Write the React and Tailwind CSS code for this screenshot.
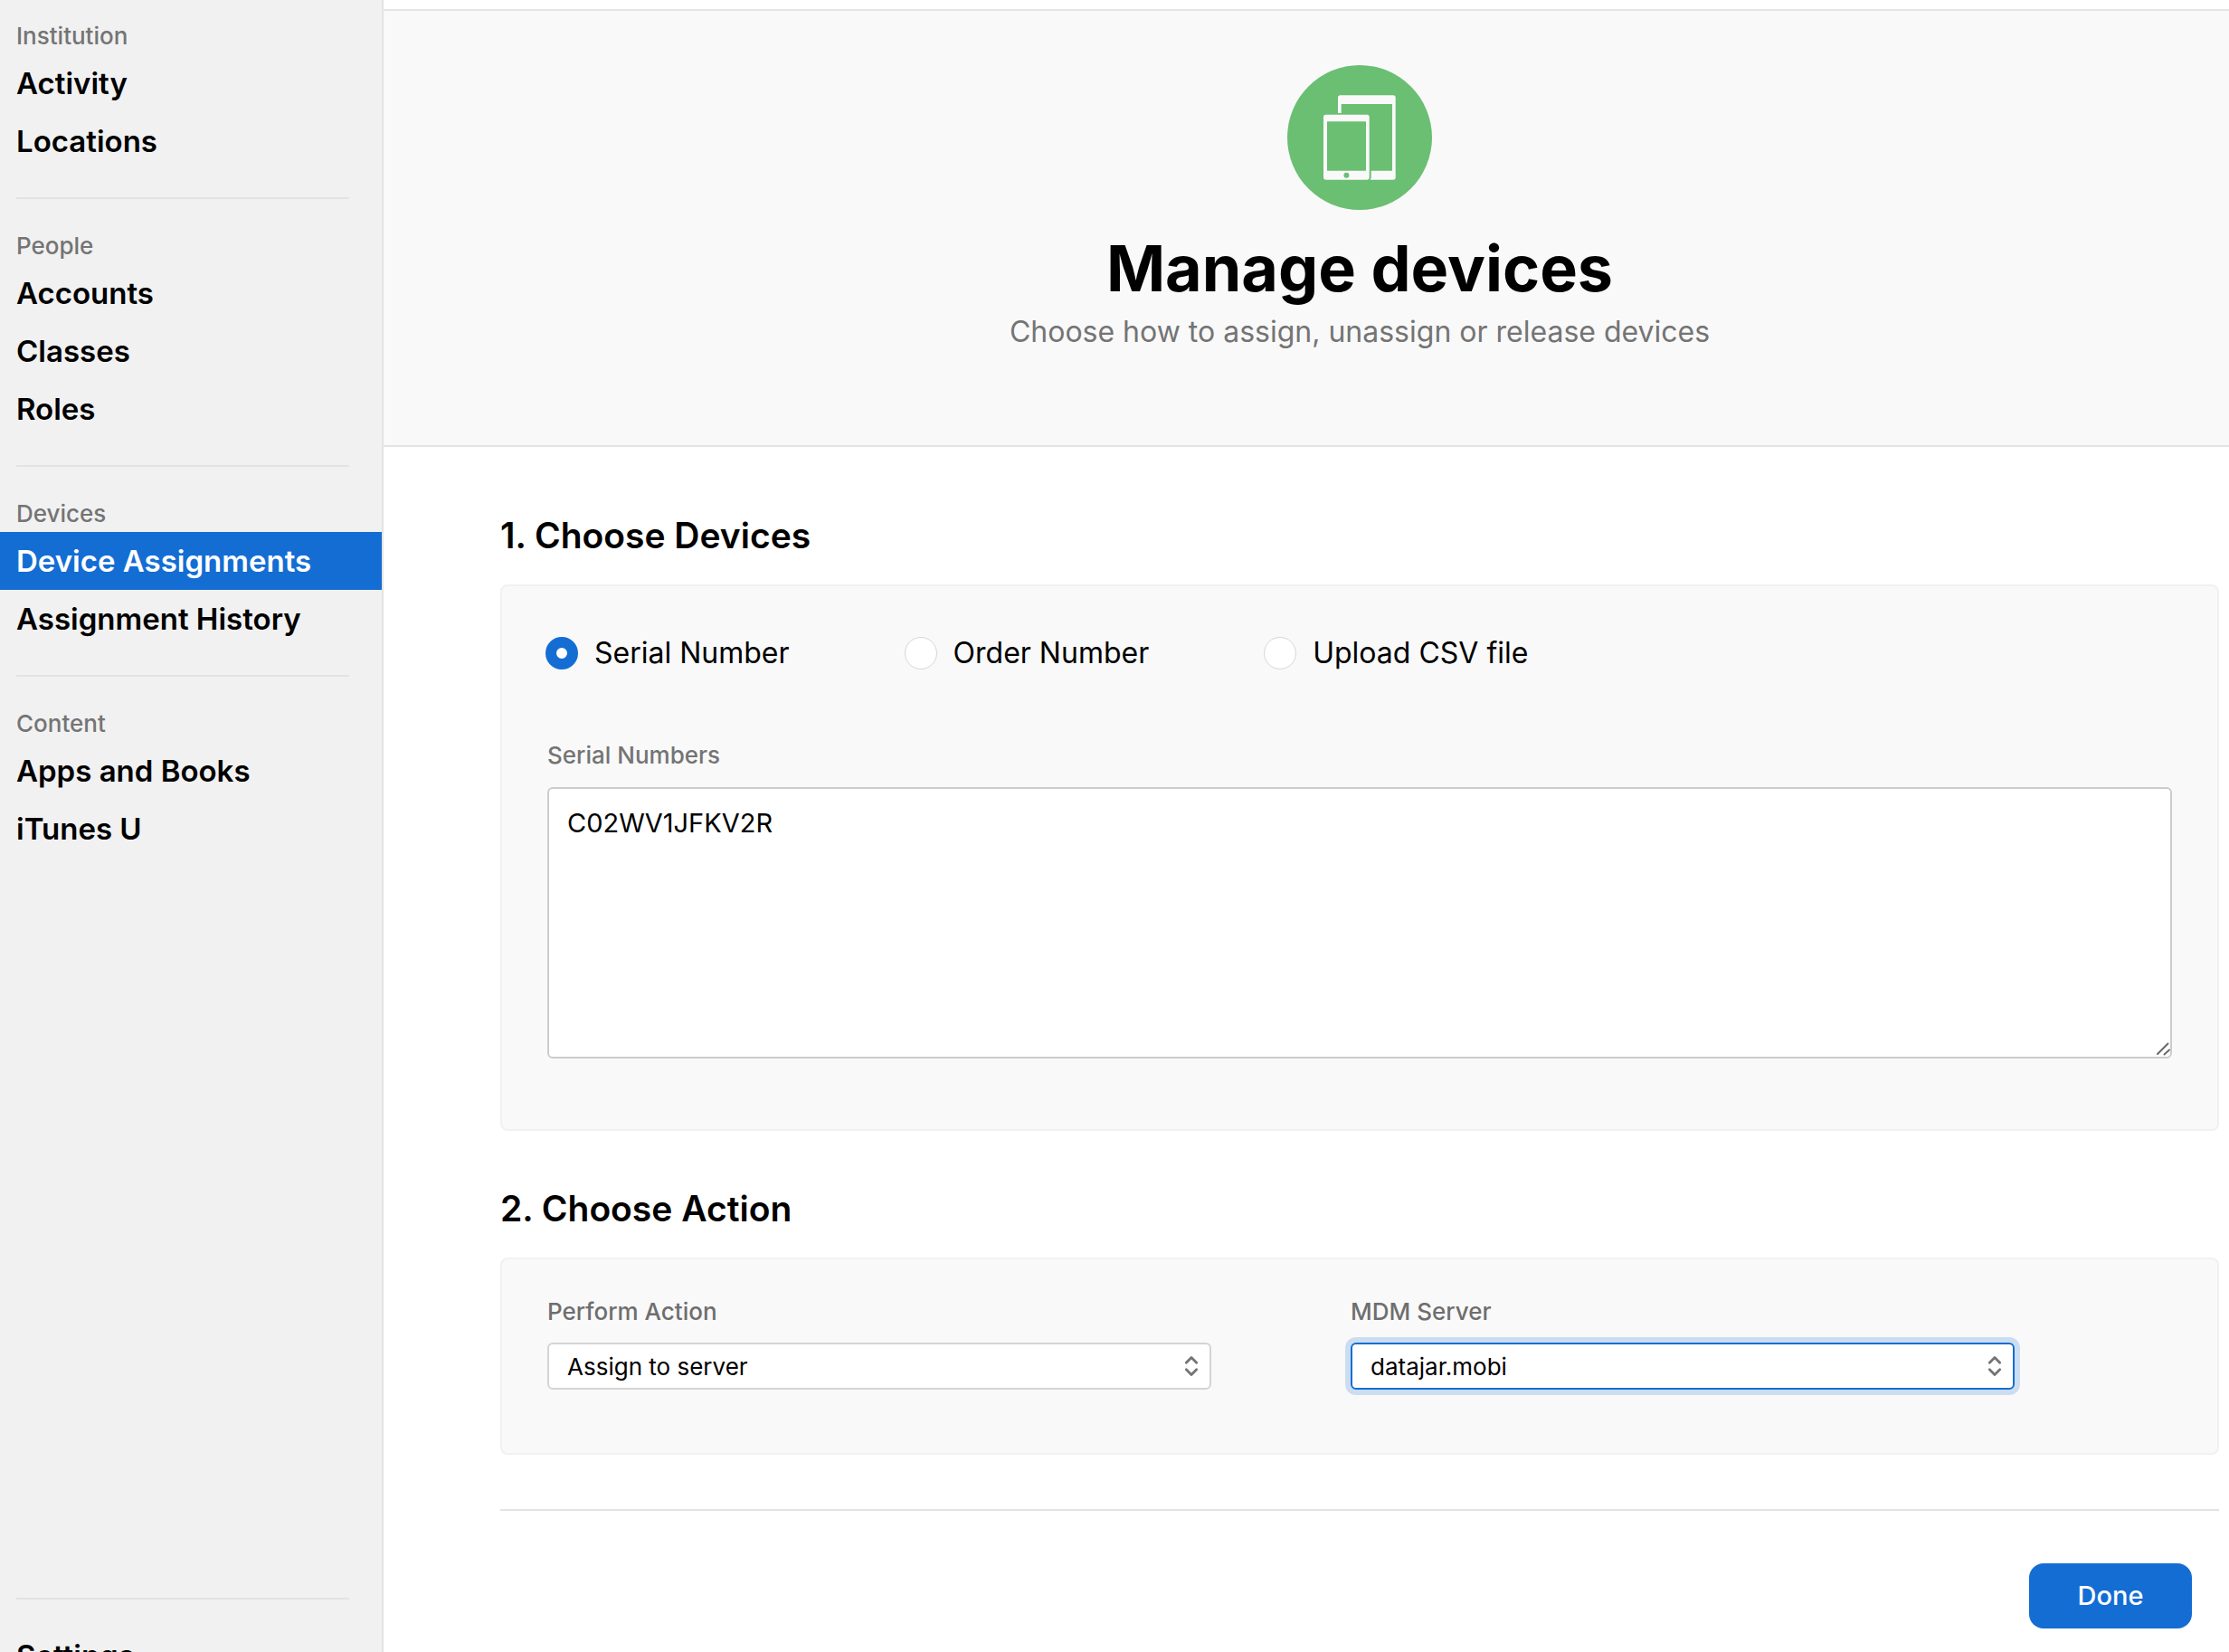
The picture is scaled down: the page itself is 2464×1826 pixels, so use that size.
import React, { useState } from "react";

const sections = [
  { title: "Institution", items: ["Activity", "Locations"] },
  { title: "People", items: ["Accounts", "Classes", "Roles"] },
  { title: "Devices", items: ["Device Assignments", "Assignment History"] },
  { title: "Content", items: ["Apps and Books", "iTunes U"] },
];

const methods = ["Serial Number", "Order Number", "Upload CSV file"];

function NavLink({ label, active }) {
  return (
    <a
      href="#"
      aria-current={active ? "page" : undefined}
      className={
        active
          ? "flex h-16 shrink-0 items-center bg-[#146dd3] px-[18px] pt-0.5 text-[33px] font-semibold text-white"
          : "flex h-16 shrink-0 items-center px-[18px] pt-0.5 text-[33px] font-semibold text-black"
      }
    >
      {label}
    </a>
  );
}

function Sidebar() {
  return (
    <nav className="sticky top-0 flex h-screen w-[424px] shrink-0 flex-col overflow-hidden border-r-2 border-[#e3e3e3] bg-[#f1f1f1] pt-[18px]">
      {sections.map((section, i) => (
        <div key={section.title} className="flex flex-col">
          {i > 0 && <hr className="my-[30px] mr-9 ml-[18px] border-t-2 border-[#e3e3e3]" />}
          <h2 className="flex h-[42px] items-center px-[18px] text-[26px] font-medium text-[#747474]">
            {section.title}
          </h2>
          {section.items.map((item) => (
            <NavLink key={item} label={item} active={item === "Device Assignments"} />
          ))}
        </div>
      ))}
      <div className="mt-auto flex h-[60px] shrink-0 flex-col">
        <hr className="mr-9 mb-[30px] ml-[18px] border-t-2 border-[#e3e3e3]" />
        <NavLink label="Settings" />
      </div>
    </nav>
  );
}

function DevicesIcon() {
  return (
    <svg viewBox="0 0 160 160" className="size-40" aria-hidden="true">
      <circle cx="80" cy="80" r="80" fill="#6abf72" />
      <path
        fill="#f9f9f9"
        d="M59 33.300h58a2.700 2.700 0 0 1 2.700 2.700v88a2.700 2.700 0 0 1-2.700 2.700H91.700q1-1.300 1-3V116.700H116V43H59.700V53H56V36a2.700 2.700 0 0 1 3-2.700z"
      />
      <path
        fill="#f9f9f9"
        fillRule="evenodd"
        d="M42.700 54.700h45.300a2.700 2.700 0 0 1 2.700 2.700v66.600a2.700 2.700 0 0 1-2.700 2.700H42.700a2.700 2.700 0 0 1-2.700-2.700V57.400a2.700 2.700 0 0 1 2.700-2.700zM44 62.300v54.400h43V62.300zM65.400 118.700a3 3 0 1 0 0 6a3 3 0 1 0 0-6z"
      />
    </svg>
  );
}

function SelectField({ id, label, options, focused }) {
  return (
    <div className="flex flex-col">
      <label htmlFor={id} className="text-[26px] leading-8 font-medium text-[#6e6e6e]">
        {label}
      </label>
      <div className="mt-[18px] grid items-center">
        <select
          id={id}
          className={
            focused
              ? "col-start-1 row-start-1 h-[52px] w-full appearance-none rounded-md border-2 border-[#146dd3] bg-white px-5 text-[26px] text-black ring-6 ring-[#cbddf1] outline-none"
              : "col-start-1 row-start-1 h-[52px] w-full appearance-none rounded-md border-2 border-[#d4d4d4] bg-white px-5 text-[26px] text-black outline-none"
          }
        >
          {options.map((o) => (
            <option key={o}>{o}</option>
          ))}
        </select>
        <svg
          viewBox="0 0 16 24"
          className="pointer-events-none col-start-1 row-start-1 mr-[14px] h-6 w-4 justify-self-end"
          fill="none"
          stroke="#747474"
          strokeWidth="2.800"
          strokeLinecap="round"
          strokeLinejoin="round"
          aria-hidden="true"
        >
          <path d="M2.300 8.200L8 2.400l5.700 5.800M2.300 15.800L8 21.600l5.700-5.800" />
        </svg>
      </div>
    </div>
  );
}

export default function App() {
  const [method, setMethod] = useState("Serial Number");
  return (
    <div className="flex min-h-screen bg-white font-['Inter',sans-serif] text-black">
      <Sidebar />
      <main className="flex min-w-0 flex-1 flex-col pt-[10px]">
        <header className="flex flex-col items-center border-y-2 border-[#e3e3e3] bg-[#f9f9f9] pt-[60px] pr-[11px] pb-[103px] pl-[129px]">
          <DevicesIcon />
          <h1 className="mt-[21px] text-[70px] leading-[88px] font-bold">Manage devices</h1>
          <p className="mt-1 text-[32px] leading-[44px] text-[#747474]">
            Choose how to assign, unassign or release devices
          </p>
        </header>

        <form className="flex flex-col pr-[11px] pl-[129px]" onSubmit={(e) => e.preventDefault()}>
          <h2 className="mt-[72px] text-[39px] leading-[52px] font-semibold">1. Choose Devices</h2>
          <section className="mt-[28px] rounded-lg border-2 border-[#f1f1f1] bg-[#f9f9f9] pt-[52px] pb-[78px]">
            <div role="radiogroup" aria-label="Choose Devices" className="flex gap-[127px] pl-12">
              {methods.map((m) => (
                <label key={m} className="flex items-center gap-[18px] text-[32px] leading-[44px]">
                  <input
                    type="radio"
                    name="method"
                    checked={method === m}
                    onChange={() => setMethod(m)}
                    className="size-9 appearance-none rounded-full border border-[#d6d6d6] bg-white checked:border-12 checked:border-[#146dd3]"
                  />
                  {m}
                </label>
              ))}
            </div>
            <div className="mt-[75px] flex flex-col px-[50px]">
              <label htmlFor="serials" className="text-[26px] leading-8 font-medium text-[#747474]">
                Serial Numbers
              </label>
              <div className="mt-[19px] grid">
                <textarea
                  id="serials"
                  defaultValue="C02WV1JFKV2R"
                  className="col-start-1 row-start-1 h-[300px] resize-y rounded-md border-2 border-[#cccccc] bg-white px-5 py-[18px] text-[29px] leading-10 text-black outline-none [&::-webkit-resizer]:bg-transparent"
                />
                <svg
                  viewBox="0 0 20 20"
                  className="pointer-events-none z-10 col-start-1 row-start-1 size-5 self-end justify-self-end"
                  stroke="#6a6a6a"
                  strokeWidth="2"
                  strokeLinecap="round"
                  aria-hidden="true"
                >
                  <path d="M4 15L15.500 3.500M11.500 15.500L17 10.500" />
                </svg>
              </div>
            </div>
          </section>

          <h2 className="mt-[60px] text-[39px] leading-[52px] font-semibold">2. Choose Action</h2>
          <section className="mt-[28px] grid grid-cols-2 gap-[154px] rounded-lg border-2 border-[#f1f1f1] bg-[#f9f9f9] pt-[42px] pr-[224px] pb-[70px] pl-[50px]">
            <SelectField id="action" label="Perform Action" options={["Assign to server"]} />
            <SelectField id="server" label="MDM Server" options={["datajar.mobi"]} focused />
          </section>

          <hr className="mt-[60px] border-t-2 border-[#e3e3e3]" />
          <div className="mt-[58px] mb-[26px] flex justify-end pr-[30px]">
            <button
              type="submit"
              className="h-[72px] w-[180px] rounded-2xl bg-[#146dd3] text-[29px] font-medium text-white"
            >
              Done
            </button>
          </div>
        </form>
      </main>
    </div>
  );
}
